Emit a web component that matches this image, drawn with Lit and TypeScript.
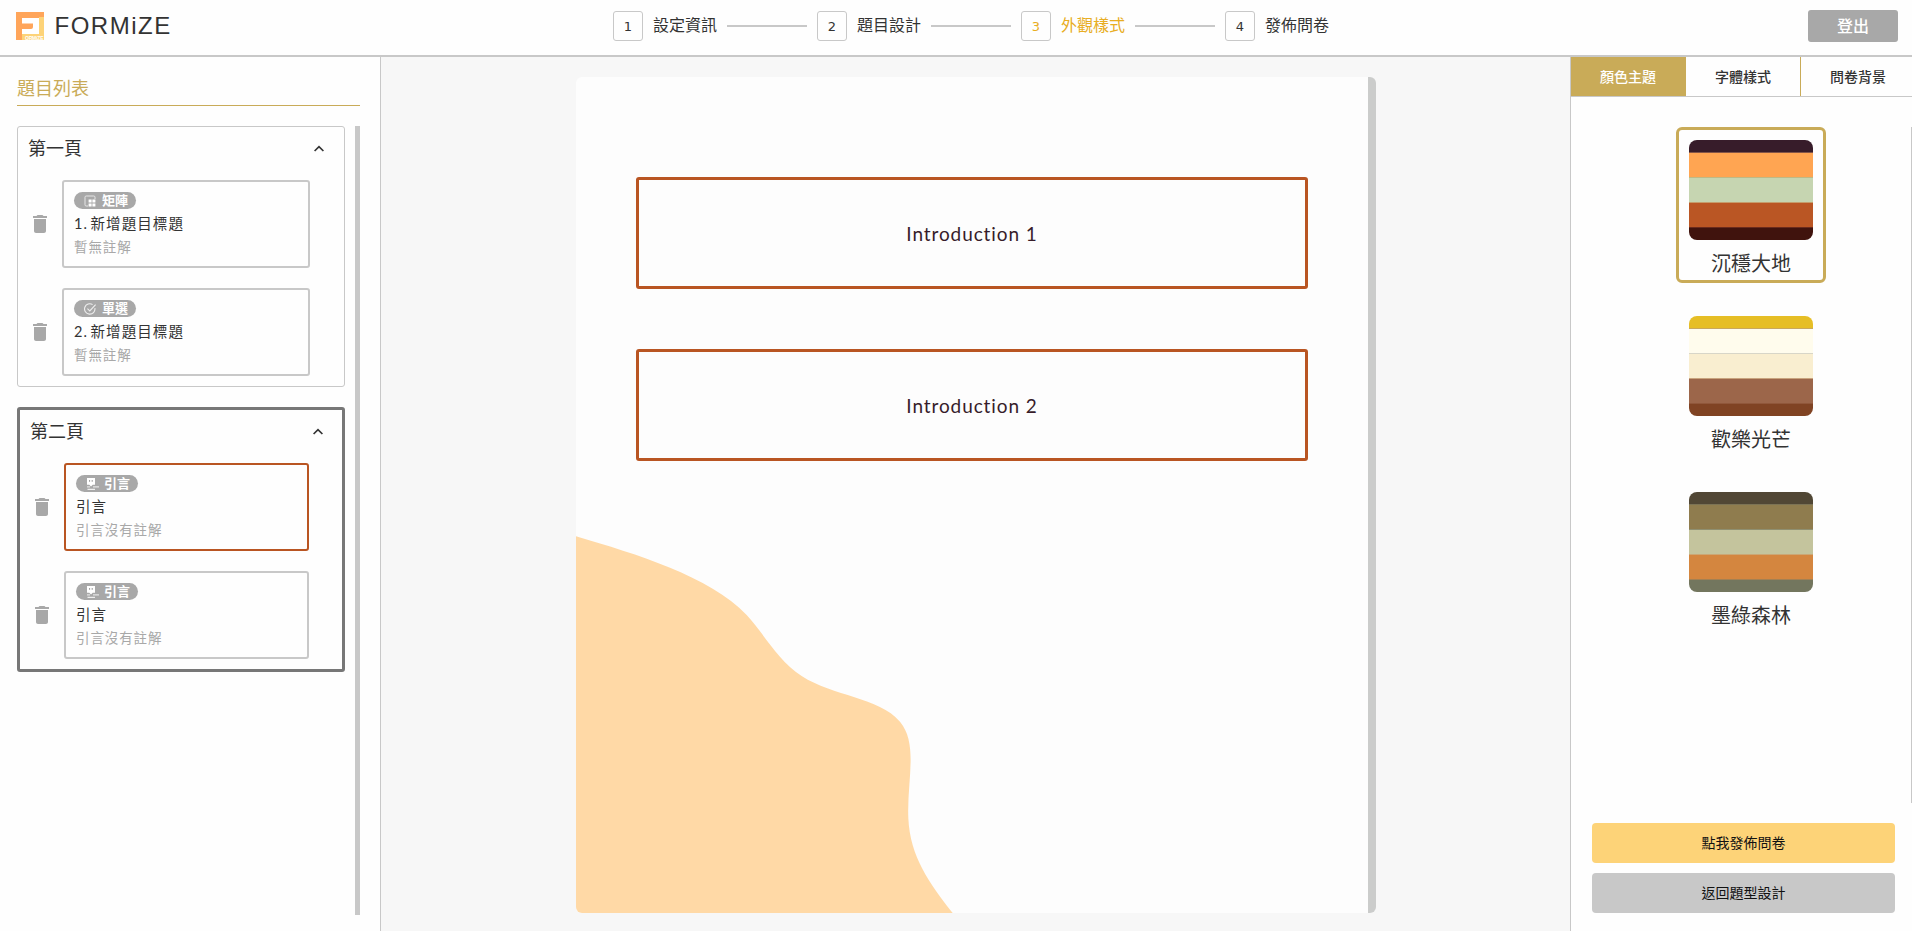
import { LitElement, html, css, svg } from "lit";
import { customElement } from "lit/decorators.js";
import { classMap } from "lit/directives/class-map.js";

type Kind = "matrix" | "single" | "intro";
interface Question { kind: Kind; tag: string; title: string; note: string; active?: boolean }
interface FormPage { name: string; active?: boolean; items: Question[] }

const pages: FormPage[] = [
  {
    name: "第一頁",
    items: [
      { kind: "matrix", tag: "矩陣", title: "1. 新增題目標題", note: "暫無註解" },
      { kind: "single", tag: "單選", title: "2. 新增題目標題", note: "暫無註解" },
    ],
  },
  {
    name: "第二頁",
    active: true,
    items: [
      { kind: "intro", tag: "引言", title: "引言", note: "引言沒有註解", active: true },
      { kind: "intro", tag: "引言", title: "引言", note: "引言沒有註解" },
    ],
  },
];

const steps = ["設定資訊", "題目設計", "外觀樣式", "發佈問卷"];
const tabs = ["顏色主題", "字體樣式", "問卷背景"];
const themes = [
  { name: "沉穩大地", colors: ["#371c2a", "#ffa552", "#c6d5b1", "#ba5624", "#40130d"], lines: ["#845547", "#bfb985", "#c59d6c", "#6a2a1c"] },
  { name: "歡樂光芒", colors: ["#e6be25", "#fffced", "#f9eed0", "#9c664a", "#804323"], lines: ["#c9a85c", "#d8d6c8", "#c9a37d", "#90573a"] },
  { name: "墨綠森林", colors: ["#514735", "#8f7c4e", "#c4c49d", "#d4863f", "#73765e"], lines: ["#7c7355", "#8f8f70", "#cba775", "#a48052"] },
];

const tagIcons = {
  matrix: svg`<path d="M4 11H2.2Q1 11 1 9.8V2.2Q1 1 2.2 1H9.8Q11 1 11 2.2V4" fill="none" stroke="#e6e6e6"/><path d="M4.6 4.6h3v3h-3zM8.4 4.6h3v3h-3zM4.6 8.4h3v3h-3zM8.4 8.4h3v3h-3z" fill="#fff"/>`,
  single: svg`<path d="M10.9 5.2A5.2 5.2 0 1 1 8.6 1.6" fill="none" stroke="#eee" stroke-width="1.1"/><path d="M3.4 5.6l2.4 2.3L11.6 1.6" fill="none" stroke="#eee" stroke-width="1.1"/>`,
  intro: svg`<path d="M1 0h8v6.8H6.7L5 8.6 3.3 6.8H1z" fill="#fff"/><path d="M3.6 2v1.8M6.2 2v1.8" stroke="#999" stroke-width="1"/><path d="M7 8.9h6M1 8.9h3" stroke="#e4e4e4" stroke-width="1.1"/><path d="M1.5 11.3H9" stroke="#fff" stroke-width="1"/>`,
};

@customElement("app-root")
export class AppRoot extends LitElement {
  static styles = css`
    :host {
      display: flex;
      flex-direction: column;
      width: 100%;
      height: 100vh;
      overflow: hidden;
      background: #fefefe;
      color: #333;
      font-family: "Noto Sans CJK TC", sans-serif;
    }
    * { box-sizing: border-box; }
    svg { display: block; flex: none; }
    .header {
      flex: none;
      height: 57px;
      border-bottom: 2px solid #c8c8c8;
      display: grid;
      grid-template-columns: 613px 1fr 104px;
      align-items: start;
    }
    .brand {
      display: flex;
      align-items: center;
      gap: 10.5px;
      padding: 12px 0 0 16px;
      height: 40px;
      font: 24px/28px "Liberation Sans", sans-serif;
      letter-spacing: 1.5px;
    }
    .steps { display: flex; align-items: center; gap: 10px; padding-top: 11px; }
    .num {
      width: 30px;
      height: 30px;
      border: 1px solid #c8c8c8;
      border-radius: 3px;
      display: flex;
      align-items: center;
      justify-content: center;
      font: 13px "DejaVu Sans", sans-serif;
    }
    .step { width: 64px; font-size: 16px; line-height: 26px; height: 30px; white-space: nowrap; }
    .link { width: 80px; height: 2px; background: #c8c8c8; }
    .on { color: #e8ad22; }
    .logout {
      width: 90px;
      height: 32px;
      margin-top: 10px;
      border-radius: 3px;
      background: #a8a8a8;
      color: #fff;
      font-size: 16px;
      font-weight: 500;
      line-height: 30px;
      text-align: center;
    }
    .body { flex: 1; min-height: 0; display: grid; grid-template-columns: 381px 1fr 342px; }
    .left {
      border-right: 1px solid #c8c8c8;
      padding: 15px 20px 16px 17px;
      display: flex;
      flex-direction: column;
      min-height: 0;
    }
    .heading {
      height: 34px;
      border-bottom: 1px solid #c9ab58;
      color: #c9ab58;
      font-size: 18px;
      line-height: 31px;
      flex: none;
    }
    .scroll { flex: 1; margin-top: 20px; display: flex; justify-content: space-between; }
    .bar { width: 5px; background: #c8c8c8; }
    .pages { width: 328px; display: flex; flex-direction: column; gap: 20px; }
    .page { border: 1px solid #c8c8c8; border-radius: 3px; padding-bottom: 10px; }
    .page.active { border: 3px solid #777; }
    .pagehead {
      display: flex;
      justify-content: space-between;
      align-items: center;
      height: 43px;
      margin-bottom: 10px;
      padding: 0 13.5px 0 10px;
      font-size: 18px;
    }
    .pagehead span { line-height: 41px; height: 43px; }
    .page.active .pagehead { padding-right: 12.5px; }
    .items { display: flex; flex-direction: column; gap: 20px; padding-left: 10px; }
    .row { display: flex; align-items: center; gap: 10px; }
    .item {
      width: 248px;
      height: 88px;
      border: 2px solid #c8c8c8;
      border-radius: 3px;
      padding: 10px;
      display: flex;
      flex-direction: column;
    }
    .page.active .item { width: 245px; }
    .item.active { border-color: #b95522; }
    .tag {
      width: 62px;
      height: 17px;
      border-radius: 9px;
      background: #a8a8a8;
      color: #fff;
      display: flex;
      align-items: center;
      gap: 5px;
      padding-left: 10px;
      font-size: 13px;
      font-weight: 700;
      white-space: nowrap;
    }
    .tag span { line-height: 16px; height: 17px; }
    .title {
      font-family: Lato, "Noto Sans CJK TC", sans-serif;
      font-size: 14.5px;
      letter-spacing: 1.1px;
      word-spacing: -2.4px;
      line-height: 24px;
      margin: 3px 0 -1px;
      white-space: nowrap;
    }
    .note { font-size: 13.5px; letter-spacing: 0.9px; line-height: 22px; color: #a8a8a8; white-space: nowrap; }
    .stage { background: #f7f7f7; padding: 20px 0 18px 195px; display: flex; }
    .paper { width: 800px; border-radius: 6px; overflow: hidden; background: #fdfdfd; display: flex; }
    .sheet { flex: 1; display: flex; flex-direction: column; }
    .thumb { width: 8px; background: #cbcccb; }
    .intro {
      width: 672px;
      height: 112px;
      margin: 100px 0 0 60px;
      border: 3px solid #b95522;
      border-radius: 3px;
      flex: none;
      display: flex;
      align-items: center;
      justify-content: center;
      font: 19px Lato, sans-serif;
      letter-spacing: 0.9px;
      color: #371c2a;
    }
    .intro + .intro { margin-top: 60px; }
    .blob { margin-top: auto; }
    .right { border-left: 1px solid #c8c8c8; display: flex; flex-direction: column; min-height: 0; overflow: hidden; }
    .tabs { display: flex; height: 40px; border-bottom: 1px solid #c8c8c8; flex: none; }
    .tab {
      flex: none;
      width: 115px;
      border-right: 1px solid #c9ab58;
      font-size: 14px;
      font-weight: 500;
      line-height: 38px;
      text-align: center;
    }
    .tab.sel { background: #c9ab58; color: #fff; }
    .themes {
      flex: 1;
      margin-top: 30px;
      border-right: 1px solid #c8c8c8;
      display: flex;
      flex-direction: column;
      align-items: flex-start;
      gap: 20px;
      padding-left: 105px;
    }
    .theme {
      width: 150px;
      height: 156px;
      border: 3px solid transparent;
      border-radius: 6px;
      padding: 10px;
      font-size: 20px;
      text-align: center;
    }
    .theme.sel { border-color: #c9ab58; }
    .swatch {
      height: 100px;
      border-radius: 8px;
      overflow: hidden;
      display: flex;
      flex-direction: column;
    }
    .stripe { height: 25px; flex: none; border-bottom: 1px solid; }
    .stripe:first-child { height: 13px; }
    .stripe:last-child { height: 12px; border: 0; }
    .name { line-height: 46px; height: 36px; }
    .actions { margin: 20px 17px 18px 21px; display: flex; flex-direction: column; gap: 10px; }
    .btn {
      height: 40px;
      border-radius: 4px;
      background: #c8c8c8;
      color: #111;
      font-size: 14px;
      line-height: 39px;
      text-align: center;
    }
    .primary { background: #fdd378; }
  `;

  private renderItem(q: Question) {
    return html`<div class="row">
      <svg width="24" height="24" viewBox="0 0 24 24"><path fill="#a8a8a8" d="M6 19c0 1.1.9 2 2 2h8c1.1 0 2-.9 2-2V7H6v12zM19 4h-3.5l-1-1h-5l-1 1H5v2h14V4z"/></svg>
      <div class=${classMap({ item: true, active: !!q.active })}>
        <div class="tag"><svg width="13" height="12" viewBox="0 0 13 12">${tagIcons[q.kind]}</svg><span>${q.tag}</span></div>
        <div class="title">${q.title}</div>
        <div class="note">${q.note}</div>
      </div>
    </div>`;
  }

  render() {
    return html`
      <div class="header">
        <div class="brand">
          <svg width="28" height="28" viewBox="0 0 28 28">
            <rect width="28" height="28" fill="#ffa55a"/>
            <path d="M28 5V28H6V22H23V5z" fill="#fdd378"/>
            <path d="M6 6H23V22H6z" fill="#fff"/>
            <path d="M5 11.5H17V15Q17 17 15 17H5z" fill="#ffa55a"/>
            <text x="9" y="27.6" font-family="Liberation Sans" font-weight="700" font-size="5" letter-spacing="0" fill="#fff" textLength="18.5">ORMiZE</text>
          </svg>
          <span>FORMiZE</span>
        </div>
        <div class="steps">
          ${steps.map((s, i) => html`
            ${i ? html`<div class="link"></div>` : ""}
            <div class=${classMap({ num: true, on: i === 2 })}>${i + 1}</div>
            <div class=${classMap({ step: true, on: i === 2 })}>${s}</div>`)}
        </div>
        <div class="logout">登出</div>
      </div>
      <div class="body">
        <div class="left">
          <div class="heading">題目列表</div>
          <div class="scroll">
            <div class="pages">
              ${pages.map((p) => html`<div class=${classMap({ page: true, active: !!p.active })}>
                <div class="pagehead"><span>${p.name}</span>
                  <svg width="24" height="24" viewBox="0 0 24 24"><path d="M7.6 14l4.4-4.3 4.4 4.3" fill="none" stroke="#333" stroke-width="1.7"/></svg>
                </div>
                <div class="items">${p.items.map((q) => this.renderItem(q))}</div>
              </div>`)}
            </div>
            <div class="bar"></div>
          </div>
        </div>
        <div class="stage">
          <div class="paper">
            <div class="sheet">
              <div class="intro">Introduction 1</div>
              <div class="intro">Introduction 2</div>
              <svg class="blob" width="380" height="377" viewBox="48 48 1140 1131">
                <path fill="#ffd9a6" d="M48 49C230 103 448 168 560 285C610 338 652 420 725 468C820 530 955 530 1020 605C1076 672 1040 785 1045 895C1050 1010 1108 1090 1178 1179H48z"/>
              </svg>
            </div>
            <div class="thumb"></div>
          </div>
        </div>
        <div class="right">
          <div class="tabs">${tabs.map((t, i) => html`<div class=${classMap({ tab: true, sel: i === 0 })}>${t}</div>`)}</div>
          <div class="themes">
            ${themes.map((t, i) => html`<div class=${classMap({ theme: true, sel: i === 0 })}>
              <div class="swatch">${t.colors.map((c, j) => html`<div class="stripe" style="background:${c};border-color:${t.lines[j] ?? c}"></div>`)}</div>
              <div class="name">${t.name}</div>
            </div>`)}
          </div>
          <div class="actions">
            <div class="btn primary">點我發佈問卷</div>
            <div class="btn">返回題型設計</div>
          </div>
        </div>
      </div>`;
  }
}
